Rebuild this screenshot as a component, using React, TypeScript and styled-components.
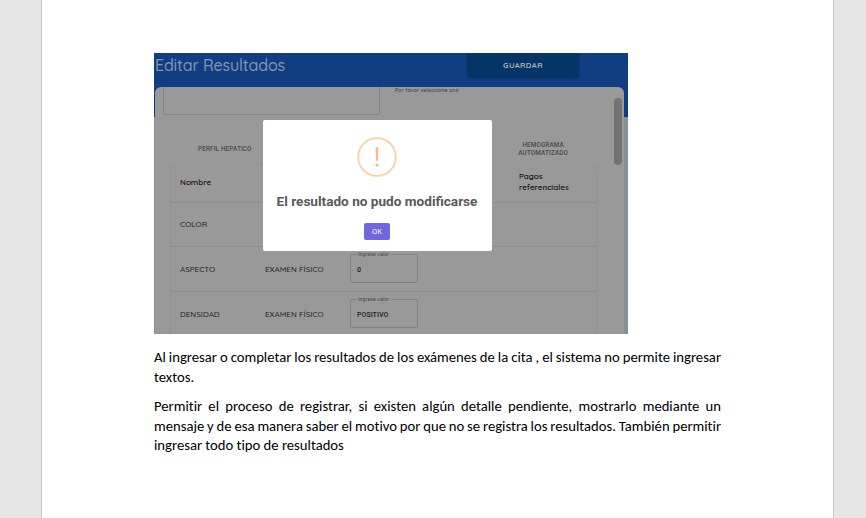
import React from "react";
import styled, { createGlobalStyle } from "styled-components";

const Global = createGlobalStyle`
  * { box-sizing: border-box; }
  body { margin: 0; background: #e6e6e6; overflow: hidden; }
`;

const Desk = styled.div`
  height: 518px;
  padding: 0 32px 0 41px;
  background: #e6e6e6;
`;
const Page = styled.main`
  height: 518px;
  padding: 53px 112px 0;
  background: #fff;
  border: solid #c6c6c6;
  border-width: 0 1px;
`;
const Capture = styled.section`
  position: relative;
  width: 474px;
  height: 281px;
  overflow: hidden;
  background: linear-gradient(#113e83 0 64px, #879097 64px);
  font-family: Roboto, sans-serif;
  color: #2a2a2a;
`;
const Header = styled.header`
  display: flex;
  justify-content: space-between;
  height: 34px;
  padding: 0 49px 0 1px;
`;
const Title = styled.h1`
  margin: 0;
  font: 500 16px/25px Quicksand, Lato, sans-serif;
  letter-spacing: -0.13px;
  color: #8794ab;
`;
const Save = styled.button`
  width: 112px;
  height: 24px;
  padding: 0;
  border: 0;
  border-radius: 0 0 3px 3px;
  background: #053567;
  box-shadow: 0 1px 2px #0c2d60;
  color: #a8b0b8;
  font: 700 7.8px/24px Quicksand, Lato, sans-serif;
  letter-spacing: 0.4px;
`;
const Panel = styled.div`
  position: relative;
  width: 469px;
  height: 247px;
  margin-left: 1px;
  background: #999;
  border-radius: 6px 6px 0 0;
`;
const Filters = styled.div`
  display: flex;
  height: 28px;
  padding-left: 8px;
`;
const SelectBox = styled.div`
  width: 217px;
  height: 28px;
  border: 1px solid #858585;
  border-top: 0;
  border-radius: 0 0 2px 2px;
`;
const Hint = styled.span`
  margin-left: 15px;
  font: 600 5px/7px Quicksand, Lato, sans-serif;
  letter-spacing: 0.2px;
  color: #444;
`;
const Tabs = styled.div`
  display: flex;
  justify-content: space-between;
  align-items: center;
  height: 49px;
  padding: 19px 56px 0 43px;
`;
const Tab = styled.div`
  font: 500 6.3px/8px Roboto, sans-serif;
  letter-spacing: 0.16px;
  text-align: center;
  color: #494949;
`;
const Table = styled.div`
  width: 427px;
  margin-left: 15px;
  border: 1px solid #919191;
  border-top-color: #949494;
  border-radius: 6px 6px 0 0;
`;
const Row = styled.div<{ $height: number; $lift?: number }>`
  display: grid;
  grid-template-columns: 85px 85px 169px 1fr;
  align-items: center;
  height: ${({ $height }) => $height}px;
  padding: 0 0 ${({ $lift = 0 }) => $lift}px 9px;
  border-bottom: 1px solid #8d8d8d;
  font: 500 8px/11px Quicksand, Lato, sans-serif;
`;
const Label = styled.span<{ $bright?: boolean }>`
  color: ${({ $bright }) => ($bright ? "#111" : "#222")};
  font-weight: ${({ $bright }) => ($bright ? 600 : 500)};
  letter-spacing: 0.02px;
  white-space: pre-line;
`;
const Field = styled.fieldset`
  width: 68px;
  height: 31px;
  margin: -3px 0 0;
  padding: 1px 0 0 6px;
  border: 1px solid #828282;
  border-radius: 2px;
  font: 500 7.1px/23px Roboto, sans-serif;
  color: #222;
`;
const Legend = styled.legend`
  height: 5px;
  padding: 0 2px 0 1px;
  font: 400 5px/5px Roboto, sans-serif;
  letter-spacing: 0.2px;
  color: #444;
`;
const Scroll = styled.div`
  position: absolute;
  top: 11px;
  right: 2px;
  width: 8px;
  height: 67px;
  border-radius: 4px;
  background: #737373;
`;
const Dialog = styled.div`
  position: absolute;
  left: 108.5px;
  top: 67px;
  display: flex;
  flex-direction: column;
  align-items: center;
  width: 229px;
  height: 131px;
  padding-top: 17px;
  border-radius: 2px;
  background: #fff;
`;
const Message = styled.h2`
  margin: 15px 0 13px;
  font: 700 13.6px/18px Roboto, sans-serif;
  color: #595959;
  white-space: nowrap;
`;
const Ok = styled.button`
  width: 26px;
  height: 17px;
  padding: 0;
  border: 0;
  border-radius: 2px;
  background: #7066e0;
  color: #fff;
  font: 400 7.5px/17px Roboto, sans-serif;
`;
const Paragraph = styled.p<{ $top: number }>`
  margin: ${({ $top }) => $top}px 0 0;
  font: 400 14.667px/19.5px Carlito, Lato, sans-serif;
  font-variant-ligatures: none;
  color: #000;
`;
const Line = styled.span<{ $justified?: boolean }>`
  display: block;
  width: 567px;
  text-align: justify;
  text-align-last: ${({ $justified }) => ($justified ? "justify" : "left")};
  word-spacing: ${({ $justified }) => ($justified ? "-0.6px" : "0")};
  white-space: nowrap;
`;

export default function App() {
  return (
    <Desk>
      <Global />
      <Page>
        <Capture>
          <Header>
            <Title>Editar Resultados</Title>
            <Save>GUARDAR</Save>
          </Header>
          <Panel>
            <Filters>
              <SelectBox />
              <Hint>Por favor seleccione uno</Hint>
            </Filters>
            <Tabs>
              <Tab>PERFIL HEPATICO</Tab>
              <Tab>HEMOGRAMA<br />AUTOMATIZADO</Tab>
            </Tabs>
            <Table>
              <Row $height={38} $lift={3}>
                <Label $bright>Nombre</Label><span /><span />
                <Label $bright>{"Pagos\nreferenciales"}</Label>
              </Row>
              <Row $height={44} $lift={1}><Label>COLOR</Label></Row>
              <Row $height={45}>
                <Label>ASPECTO</Label><Label>EXAMEN FÍSICO</Label>
                <Field><Legend>Ingrese valor</Legend>0</Field>
              </Row>
              <Row $height={45}>
                <Label>DENSIDAD</Label><Label>EXAMEN FÍSICO</Label>
                <Field><Legend>Ingrese valor</Legend>POSITIVO</Field>
              </Row>
            </Table>
            <Scroll />
          </Panel>
          <Dialog>
            <svg width="40" height="40" viewBox="0 0 40 40" fill="none">
              <circle cx="20" cy="20" r="18.8" stroke="#facea8" strokeWidth="1.8" />
              <path d="M18.6 10.3h2.8l-.4 13.5h-2z" fill="#f8bb86" />
              <circle cx="20" cy="28" r="1.6" fill="#f8bb86" />
            </svg>
            <Message>El resultado no pudo modificarse</Message>
            <Ok>OK</Ok>
          </Dialog>
        </Capture>
        <Paragraph $top={14}>
          <Line $justified>Al ingresar o completar los resultados de los exámenes de la cita , el sistema no permite ingresar</Line>
          <Line>textos.</Line>
        </Paragraph>
        <Paragraph $top={10}>
          <Line $justified>Permitir el proceso de registrar, si existen algún detalle pendiente, mostrarlo mediante un</Line>
          <Line $justified>mensaje y de esa manera saber el motivo por que no se registra los resultados. También permitir</Line>
          <Line>ingresar todo tipo de resultados</Line>
        </Paragraph>
      </Page>
    </Desk>
  );
}
